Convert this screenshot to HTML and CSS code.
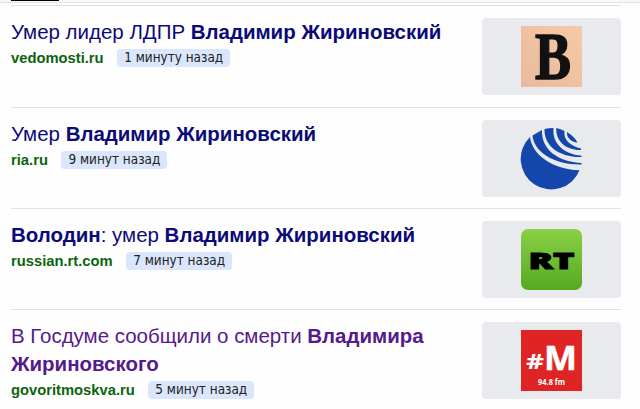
FILE: index.html
```html
<!DOCTYPE html>
<html lang="ru">

<head>
  <meta charset="UTF-8">
  <meta name="viewport" content="width=device-width, initial-scale=1.0">
  <title>Новости</title>
  <link rel="stylesheet" href="styles.css">
</head>

<body>

  <div class="tabs">
    <div class="tab-active"></div>
  </div>

  <main class="news-list">
    <article class="news-item">
      <div class="news-text">
        <a class="news-title">Умер лидер ЛДПР <b>Владимир Жириновский</b></a>
        <div class="news-meta">
          <span class="source">vedomosti.ru</span>
          <span class="time">1 минуту назад</span>
        </div>
      </div>
      <div class="thumb">
        <svg class="logo" viewBox="0 0 61 61">
          <defs>
            <linearGradient id="peach" x1="1" y1="0" x2="0" y2="1">
              <stop offset="0" stop-color="#f5caa5" />
              <stop offset="1" stop-color="#e9b99f" />
            </linearGradient>
          </defs>
          <rect width="61" height="61" fill="url(#peach)" />
          <text class="logo-b" x="14" y="53" textLength="36" lengthAdjust="spacingAndGlyphs">B</text>
        </svg>
      </div>
    </article>

    <article class="news-item">
      <div class="news-text">
        <a class="news-title">Умер <b>Владимир Жириновский</b></a>
        <div class="news-meta">
          <span class="source">ria.ru</span>
          <span class="time">9 минут назад</span>
        </div>
      </div>
      <div class="thumb">
        <svg class="logo" viewBox="0 0 61 61">
          <g fill="#1546ac">
            <path d="M9 9C11 26 30 41 58.5 42.3A30.5 30.5 0 1 1 9 9Z" />
            <path d="M11.5 7.5C13 24 33 37 60.5 36.5V35C38 34 20 22 21 2Z" />
            <path d="M23.5 1C23 18 38 29.5 60.5 29V27.8C42 26 31 15 32.5 0Q28 0 23.5 1Z" />
            <path d="M35.3 0C34.5 13 45 22.5 60 22V20.5C50 18 42 12 43.5 3Q39.5 1 35.3 0Z" />
            <path d="M46 4C45.5 10 50 14 56.5 14.5C54.500 10.5 50.5 6.5 46 4Z" />
          </g>
        </svg>
      </div>
    </article>

    <article class="news-item">
      <div class="news-text">
        <a class="news-title"><b>Володин</b>: умер <b>Владимир Жириновский</b></a>
        <div class="news-meta">
          <span class="source">russian.rt.com</span>
          <span class="time">7 минут назад</span>
        </div>
      </div>
      <div class="thumb">
        <svg class="logo" viewBox="0 0 61 61">
          <defs>
            <linearGradient id="green" x1="0" y1="0" x2="0" y2="1">
              <stop offset="0" stop-color="#8bd047" />
              <stop offset="1" stop-color="#54aa22" />
            </linearGradient>
          </defs>
          <rect width="61" height="61" rx="7" fill="url(#green)" />
          <text class="logo-rt" x="7.5" y="39.5" textLength="46" lengthAdjust="spacingAndGlyphs">RT</text>
        </svg>
      </div>
    </article>

    <article class="news-item">
      <div class="news-text">
        <a class="news-title visited">В Госдуме сообщили о смерти <b>Владимира Жириновского</b></a>
        <div class="news-meta">
          <span class="source">govoritmoskva.ru</span>
          <span class="time">5 минут назад</span>
        </div>
      </div>
      <div class="thumb">
        <svg class="logo" viewBox="0 0 61 61">
          <rect width="61" height="61" fill="#df2426" />
          <text class="logo-hash" x="5" y="39" textLength="18" lengthAdjust="spacingAndGlyphs">#</text>
          <text class="logo-m" x="23" y="39.5" textLength="33" lengthAdjust="spacingAndGlyphs">M</text>
          <text class="logo-fm" x="17" y="55" textLength="27" lengthAdjust="spacingAndGlyphs">94.8 fm</text>
        </svg>
      </div>
    </article>
  </main>

</body>

</html>
```

FILE: styles.css
```css
body {
  margin: 0;
  height: 409px;
  overflow: hidden;
  background-color: #fefefe;
  font-family: "Liberation Sans", Arial, sans-serif;
}

.tabs {
  height: 2px;
  padding-left: 11px;
  background-color: #f8f8f8;
  border-bottom: 1px solid #e4e4e4;
}

.tab-active {
  width: 48px;
  height: 1px;
  background-color: #000;
}

.news-list {
  margin: 2.2px 19px 0 11px;
}

.news-item {
  display: flex;
  justify-content: space-between;
  height: 88.4px;
  padding-top: 12px;
  border-top: 1px solid #e2e2e2;
}

.news-text {
  width: 450px;
}

.news-title {
  display: block;
  font-size: 20.48px;
  line-height: 27.5px;
  color: #0b0b78;
}

.visited {
  color: #551a8b;
}

.news-meta {
  display: flex;
  align-items: center;
  margin-top: 3.5px;
}

.source {
  font-size: 14.75px;
  font-weight: bold;
  line-height: 18px;
  color: #0c640c;
}

.time {
  margin-left: 13.5px;
  padding: 0 7px;
  font-family: "DejaVu Sans Condensed", "DejaVu Sans", sans-serif;
  font-stretch: condensed;
  font-size: 13.45px;
  line-height: 18px;
  color: #222;
  background-color: #d9e6fc;
  border-radius: 4px;
}

.thumb {
  display: flex;
  align-items: center;
  justify-content: center;
  width: 139px;
  height: 77px;
  background-color: #e8eaee;
  border-radius: 4px;
}

.logo {
  width: 61px;
  height: 61px;
  overflow: visible;
}

.logo-b {
  font-family: "Liberation Serif", serif;
  font-size: 67px;
  font-weight: bold;
  fill: #111;
  stroke: #111;
  stroke-width: 1.5px;
}

.logo-rt {
  font-family: "Open Sans", sans-serif;
  font-size: 23px;
  font-weight: 800;
  stroke: #000;
  stroke-width: 1px;
}

.logo-hash,
.logo-m,
.logo-fm {
  font-family: "Noto Sans", sans-serif;
  font-weight: bold;
  fill: #fff;
}

.logo-hash {
  font-size: 21px;
}

.logo-m {
  font-size: 34px;
  stroke: #fff;
  stroke-width: 0.5px;
}

.logo-fm {
  font-size: 8px;
}
```
